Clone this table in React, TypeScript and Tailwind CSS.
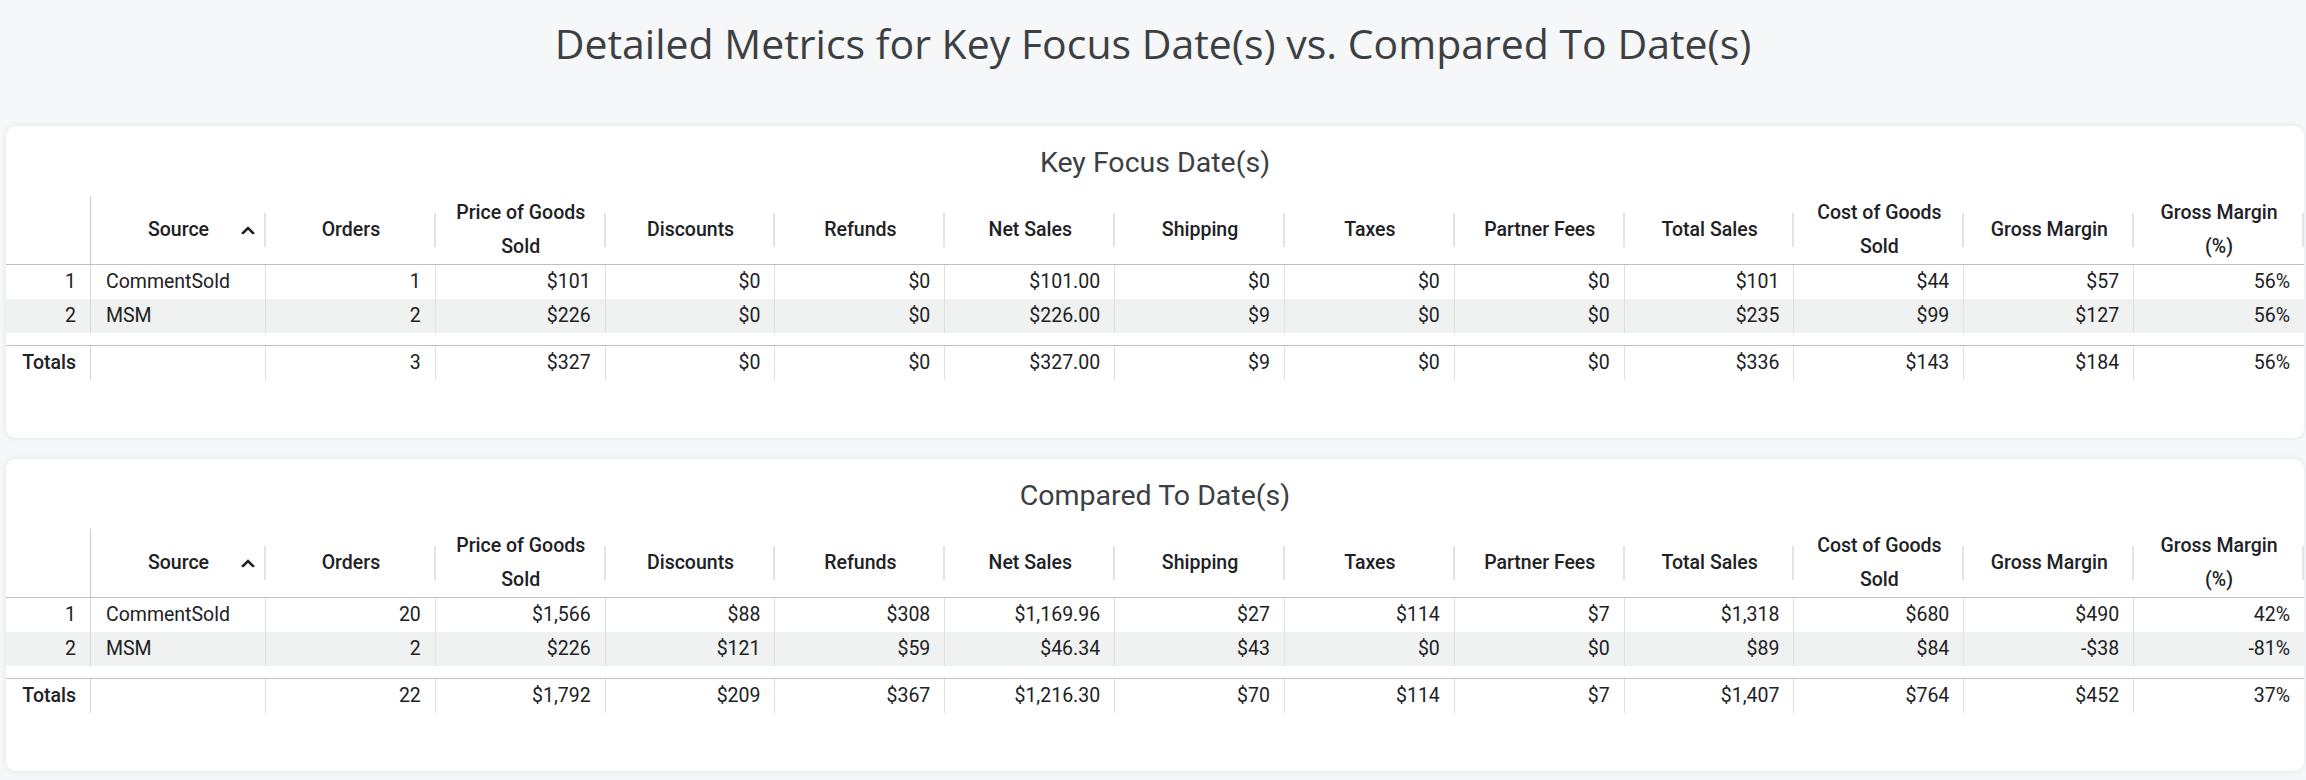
type MetricRow = { source: string; values: string[] };

type TableData = {
  title: string;
  rows: MetricRow[];
  totals: string[];
};

const HEADERS: string[][] = [
  ["Orders"],
  ["Price of Goods", "Sold"],
  ["Discounts"],
  ["Refunds"],
  ["Net Sales"],
  ["Shipping"],
  ["Taxes"],
  ["Partner Fees"],
  ["Total Sales"],
  ["Cost of Goods", "Sold"],
  ["Gross Margin"],
  ["Gross Margin", "(%)"],
];

const TABLES: TableData[] = [
  {
    title: "Key Focus Date(s)",
    rows: [
      {
        source: "CommentSold",
        values: ["1", "$101", "$0", "$0", "$101.00", "$0", "$0", "$0", "$101", "$44", "$57", "56%"],
      },
      {
        source: "MSM",
        values: ["2", "$226", "$0", "$0", "$226.00", "$9", "$0", "$0", "$235", "$99", "$127", "56%"],
      },
    ],
    totals: ["3", "$327", "$0", "$0", "$327.00", "$9", "$0", "$0", "$336", "$143", "$184", "56%"],
  },
  {
    title: "Compared To Date(s)",
    rows: [
      {
        source: "CommentSold",
        values: ["20", "$1,566", "$88", "$308", "$1,169.96", "$27", "$114", "$7", "$1,318", "$680", "$490", "42%"],
      },
      {
        source: "MSM",
        values: ["2", "$226", "$121", "$59", "$46.34", "$43", "$0", "$0", "$89", "$84", "-$38", "-81%"],
      },
    ],
    totals: ["22", "$1,792", "$209", "$367", "$1,216.30", "$70", "$114", "$7", "$1,407", "$764", "$452", "37%"],
  },
];

const GRID = "grid grid-cols-[85px_175px_repeat(12,minmax(0,1fr))]";

function SortCaret() {
  return (
    <svg
      viewBox="0 0 14 9"
      className="absolute right-[11px] top-1/2 h-[9px] w-[14px] -translate-y-1/2"
      fill="none"
      stroke="#202124"
      strokeWidth="2.6"
      strokeLinecap="square"
    >
      <polyline points="2,7.5 7,2.5 12,7.5" />
    </svg>
  );
}

function HeaderRow() {
  return (
    <div className={`${GRID} h-[69px] border-b border-[#bdc1c6] text-[19.5px] font-medium leading-[34px] text-[#202124]`}>
      <div className="border-r border-[#c8c8c8]" />
      <div className="relative flex items-center justify-center">
        <span>Source</span>
        <SortCaret />
        <span className="absolute right-0 top-1/2 h-[34px] w-[2px] -translate-y-1/2 bg-[#e3e3e3]" />
      </div>
      {HEADERS.map((lines, i) => (
        <div key={i} className="relative flex flex-col items-center justify-center text-center">
          {lines.map((l) => (
            <span key={l}>{l}</span>
          ))}
          <span className="absolute right-0 top-1/2 h-[34px] w-[2px] -translate-y-1/2 bg-[#e3e3e3]" />
        </div>
      ))}
    </div>
  );
}

function BodyRow({ index, row, shaded }: { index: number; row: MetricRow; shaded: boolean }) {
  return (
    <div className={`${GRID} h-[34px] text-[19.5px] text-[#202124] ${shaded ? "bg-[#f0f1f1]" : ""}`}>
      <div className="flex items-center justify-end border-r border-[#d6d6d6] pr-[14px]">{index}</div>
      <div className="flex items-center border-r border-[#e0e0e0] pl-[15px]">{row.source}</div>
      {row.values.map((v, i) => (
        <div
          key={i}
          className={`flex items-center justify-end pr-[14px] ${i < row.values.length - 1 ? "border-r border-[#e0e0e0]" : ""}`}
        >
          {v}
        </div>
      ))}
    </div>
  );
}

function TotalsRow({ totals }: { totals: string[] }) {
  return (
    <div className={`${GRID} mt-[12px] h-[35px] border-t border-[#bdc1c6] text-[19.5px] text-[#202124]`}>
      <div className="flex items-center justify-end border-r border-[#d6d6d6] pr-[14px] font-medium">Totals</div>
      <div className="border-r border-[#e0e0e0]" />
      {totals.map((v, i) => (
        <div
          key={i}
          className={`flex items-center justify-end pr-[14px] ${i < totals.length - 1 ? "border-r border-[#e0e0e0]" : ""}`}
        >
          {v}
        </div>
      ))}
    </div>
  );
}

function MetricsCard({ data }: { data: TableData }) {
  return (
    <section className="ml-[6px] mr-[2px] h-[312px] overflow-hidden rounded-[10px] bg-white shadow-[0_0_6px_rgba(0,0,0,0.08)]">
      <h2 className="mb-[16px] pt-[20px] text-center text-[28.5px] leading-[34px] text-[#3c4043]">{data.title}</h2>
      <HeaderRow />
      {data.rows.map((row, i) => (
        <BodyRow key={row.source} index={i + 1} row={row} shaded={i % 2 === 1} />
      ))}
      <TotalsRow totals={data.totals} />
    </section>
  );
}

export default function App() {
  return (
    <div className="min-h-[780px] w-[2306px] bg-[#f6f7f9] font-['Roboto',sans-serif]">
      <h1 className="h-[126px] pt-[22px] text-center font-['Open_Sans',sans-serif] text-[41px] leading-[42px] text-[#3c4043]">
        Detailed Metrics for Key Focus Date(s) vs. Compared To Date(s)
      </h1>
      <div className="flex flex-col gap-[21px]">
        {TABLES.map((t) => (
          <MetricsCard key={t.title} data={t} />
        ))}
      </div>
    </div>
  );
}
